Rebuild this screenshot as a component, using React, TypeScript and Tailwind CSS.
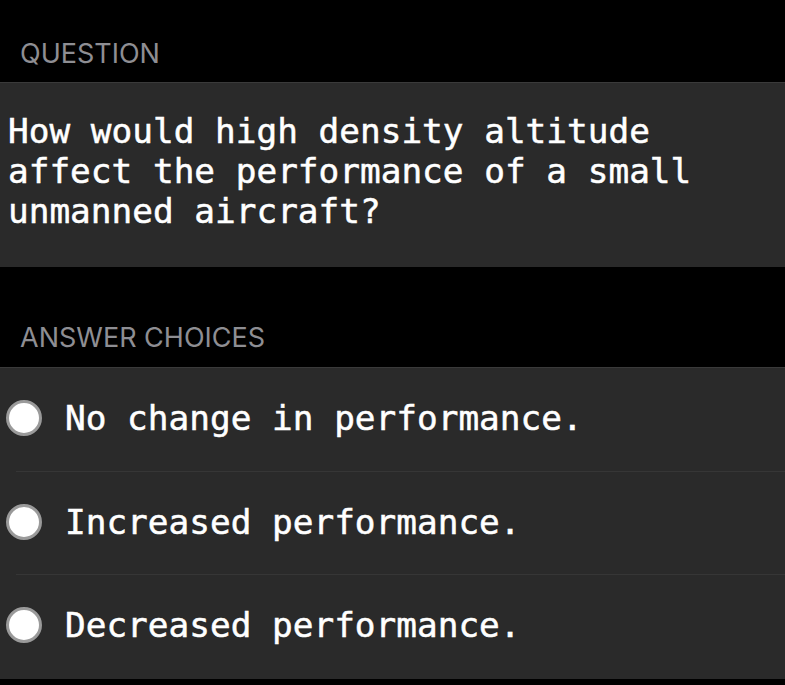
const answers = [
  "No change in performance.",
  "Increased performance.",
  "Decreased performance.",
];

function Radio() {
  return (
    <span className="block h-9 w-9 shrink-0 rounded-full border-[3px] border-[#9a9a9a] bg-white" />
  );
}

export default function App() {
  const mono = { fontFamily: '"DejaVu Sans Mono", "Liberation Mono", monospace' };
  const sans = { fontFamily: 'Inter, "Liberation Sans", sans-serif' };

  return (
    <div className="h-[685px] w-[785px] overflow-hidden bg-black text-white">
      <div className="flex h-[82px] items-end pb-[15px] pl-5">
        <h2 className="text-[27px] leading-none text-[#8e8e93]" style={sans}>
          QUESTION
        </h2>
      </div>

      <div className="flex h-[185px] items-start border-t border-[#3a3a3a] bg-[#2a2a2a] pl-2 pt-[28px]">
        <p
          className="text-[34.4px] leading-[40px] text-white [-webkit-text-stroke:0.5px_white]"
          style={mono}
        >
          How would high density altitude
          <br />
          affect the performance of a small
          <br />
          unmanned aircraft?
        </p>
      </div>

      <div className="flex h-[100px] items-end pb-[16px] pl-5">
        <h2 className="text-[27px] leading-none text-[#8e8e93]" style={sans}>
          ANSWER CHOICES
        </h2>
      </div>

      <div className="border-t border-[#3a3a3a] bg-[#2a2a2a]">
        {answers.map((a, i) => (
          <div key={a} className="relative flex h-[103.5px] items-center gap-[23px] pb-[3px] pl-[6px]">
            <Radio />
            <span
              className="text-[34.4px] leading-none text-white [-webkit-text-stroke:0.5px_white]"
              style={mono}
            >
              {a}
            </span>
            {i < answers.length - 1 && (
              <span className="absolute bottom-0 left-4 right-0 h-px bg-[#363636]" />
            )}
          </div>
        ))}
      </div>
    </div>
  );
}
